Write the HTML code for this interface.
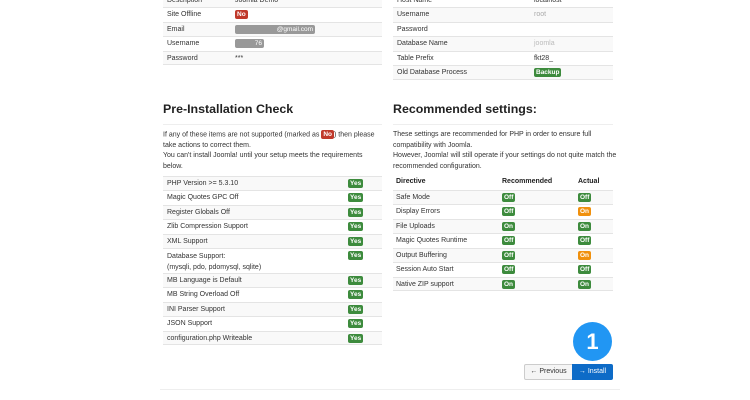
<!DOCTYPE html>
<html><head><meta charset="utf-8"><style>
body{margin:0;width:750px;height:400px;background:#fff;overflow:hidden;position:relative;font-family:"Liberation Sans",Arial,sans-serif;font-size:7px;color:#333}
.r{position:absolute;border-top:1px solid #e4e4e4;box-sizing:border-box;line-height:14px}
.s{background:#f9f9f9}
.r span{position:absolute;top:0}
.b{display:inline-block;color:#fff;font-weight:bold;font-size:6.5px;line-height:9px;padding:0 2px;border-radius:2px;vertical-align:middle}
.g{background:#3d8b3d}.red{background:#c0392b}.o{background:#f0900d}.gr{background:#999}
.h{position:absolute;font-size:12.4px;font-weight:bold;color:#222;line-height:16px}
.hl{position:absolute;height:1px;background:#eee}
.p{position:absolute;line-height:10.5px;font-size:7px;color:#333}
</style></head><body>
<div class="r s" style="left:163px;top:-7px;width:219px;height:14px"><span style="left:4px">Description</span><span style="left:72px">Joomla Demo</span></div>
<div class="r" style="left:163px;top:7px;width:219px;height:15px"><span style="left:4px">Site Offline</span><span style="left:72px"><i class="b red" style="font-style:normal">No</i></span></div>
<div class="r s" style="left:163px;top:22px;width:219px;height:14px"><span style="left:4px">Email</span><span style="left:72px"><i class="b gr" style="font-style:normal;font-weight:normal;width:76px;text-align:right">@gmail.com</i></span></div>
<div class="r" style="left:163px;top:36px;width:219px;height:15px"><span style="left:4px">Username</span><span style="left:72px"><i class="b gr" style="font-style:normal;font-weight:normal;width:25px;text-align:right">76</i></span></div>
<div class="r s" style="left:163px;top:51px;width:219px;height:14px;border-bottom:1px solid #e4e4e4"><span style="left:4px">Password</span><span style="left:72px">***</span></div>
<div class="r" style="left:393px;top:-7px;width:220px;height:15px"><span style="left:4px">Host Name</span><span style="left:141px">localhost</span></div>
<div class="r s" style="left:393px;top:7px;width:220px;height:15px"><span style="left:4px">Username</span><span style="left:141px;color:#aaa">root</span></div>
<div class="r" style="left:393px;top:22px;width:220px;height:14px"><span style="left:4px">Password</span></div>
<div class="r s" style="left:393px;top:36px;width:220px;height:15px"><span style="left:4px">Database Name</span><span style="left:141px;color:#bbb">joomla</span></div>
<div class="r" style="left:393px;top:51px;width:220px;height:14px"><span style="left:4px">Table Prefix</span><span style="left:141px">fkt28_</span></div>
<div class="r s" style="left:393px;top:65px;width:220px;height:15px;border-bottom:1px solid #e4e4e4"><span style="left:4px">Old Database Process</span><span style="left:141px"><i class="b g" style="font-style:normal">Backup</i></span></div>

<div class="h" style="left:163px;top:101px">Pre-Installation Check</div>
<div class="hl" style="left:163px;top:124px;width:219px"></div>
<div class="p" style="left:163px;top:130px;width:220px">If any of these items are not supported (marked as <i class="b red" style="font-style:normal">No</i>) then please take actions to correct them.<br>You can't install Joomla! until your setup meets the requirements below.</div>

<div class="h" style="left:393px;top:101px">Recommended settings:</div>
<div class="hl" style="left:393px;top:124px;width:220px"></div>
<div class="p" style="left:393px;top:130px;width:225px">These settings are recommended for PHP in order to ensure full compatibility with Joomla.<br>However, Joomla! will still operate if your settings do not quite match the recommended configuration.</div>

<div class="r s" style="left:163px;top:176px;width:219px;height:14px"><span style="left:4px">PHP Version &gt;= 5.3.10</span><span style="left:185px"><i class="b g" style="font-style:normal">Yes</i></span></div>
<div class="r" style="left:163px;top:190px;width:219px;height:15px"><span style="left:4px">Magic Quotes GPC Off</span><span style="left:185px"><i class="b g" style="font-style:normal">Yes</i></span></div>
<div class="r s" style="left:163px;top:205px;width:219px;height:14px"><span style="left:4px">Register Globals Off</span><span style="left:185px"><i class="b g" style="font-style:normal">Yes</i></span></div>
<div class="r" style="left:163px;top:219px;width:219px;height:15px"><span style="left:4px">Zlib Compression Support</span><span style="left:185px"><i class="b g" style="font-style:normal">Yes</i></span></div>
<div class="r s" style="left:163px;top:234px;width:219px;height:14px"><span style="left:4px">XML Support</span><span style="left:185px"><i class="b g" style="font-style:normal">Yes</i></span></div>
<div class="r" style="left:163px;top:248px;width:219px;height:25px"><span style="left:4px;line-height:11px;top:2px">Database Support:<br>(mysqli, pdo, pdomysql, sqlite)</span><span style="left:185px"><i class="b g" style="font-style:normal">Yes</i></span></div>
<div class="r s" style="left:163px;top:273px;width:219px;height:14px"><span style="left:4px">MB Language is Default</span><span style="left:185px"><i class="b g" style="font-style:normal">Yes</i></span></div>
<div class="r" style="left:163px;top:287px;width:219px;height:15px"><span style="left:4px">MB String Overload Off</span><span style="left:185px"><i class="b g" style="font-style:normal">Yes</i></span></div>
<div class="r s" style="left:163px;top:302px;width:219px;height:14px"><span style="left:4px">INI Parser Support</span><span style="left:185px"><i class="b g" style="font-style:normal">Yes</i></span></div>
<div class="r" style="left:163px;top:316px;width:219px;height:15px"><span style="left:4px">JSON Support</span><span style="left:185px"><i class="b g" style="font-style:normal">Yes</i></span></div>
<div class="r s" style="left:163px;top:331px;width:219px;height:14px;border-bottom:1px solid #e4e4e4"><span style="left:4px">configuration.php Writeable</span><span style="left:185px"><i class="b g" style="font-style:normal">Yes</i></span></div>

<div class="r" style="left:393px;top:175px;width:220px;height:15px;border-top:none;font-weight:bold;color:#222"><span style="left:3px">Directive</span><span style="left:109px">Recommended</span><span style="left:185px">Actual</span></div>
<div class="r s" style="left:393px;top:190px;width:220px;height:14px"><span style="left:3px">Safe Mode</span><span style="left:109px"><i class="b g" style="font-style:normal">Off</i></span><span style="left:185px"><i class="b g" style="font-style:normal">Off</i></span></div>
<div class="r" style="left:393px;top:204px;width:220px;height:15px"><span style="left:3px">Display Errors</span><span style="left:109px"><i class="b g" style="font-style:normal">Off</i></span><span style="left:185px"><i class="b o" style="font-style:normal">On</i></span></div>
<div class="r s" style="left:393px;top:219px;width:220px;height:14px"><span style="left:3px">File Uploads</span><span style="left:109px"><i class="b g" style="font-style:normal">On</i></span><span style="left:185px"><i class="b g" style="font-style:normal">On</i></span></div>
<div class="r" style="left:393px;top:233px;width:220px;height:15px"><span style="left:3px">Magic Quotes Runtime</span><span style="left:109px"><i class="b g" style="font-style:normal">Off</i></span><span style="left:185px"><i class="b g" style="font-style:normal">Off</i></span></div>
<div class="r s" style="left:393px;top:248px;width:220px;height:14px"><span style="left:3px">Output Buffering</span><span style="left:109px"><i class="b g" style="font-style:normal">Off</i></span><span style="left:185px"><i class="b o" style="font-style:normal">On</i></span></div>
<div class="r" style="left:393px;top:262px;width:220px;height:15px"><span style="left:3px">Session Auto Start</span><span style="left:109px"><i class="b g" style="font-style:normal">Off</i></span><span style="left:185px"><i class="b g" style="font-style:normal">Off</i></span></div>
<div class="r s" style="left:393px;top:277px;width:220px;height:14px;border-bottom:1px solid #e4e4e4"><span style="left:3px">Native ZIP support</span><span style="left:109px"><i class="b g" style="font-style:normal">On</i></span><span style="left:185px"><i class="b g" style="font-style:normal">On</i></span></div>

<div style="position:absolute;left:573px;top:322px;width:39px;height:39px;border-radius:50%;background:#2196f3;color:#fff;font-size:22px;font-weight:bold;text-align:center;line-height:39px">1</div>
<div style="position:absolute;left:524px;top:364px;width:47px;height:14px;border:1px solid #ccc;background:#f5f5f5;border-radius:2px 0 0 2px;text-align:center;line-height:14px;color:#333">&#8592; Previous</div>
<div style="position:absolute;left:572px;top:364px;width:41px;height:16px;background:#0d6bc7;border-radius:0 2px 2px 0;text-align:center;line-height:16px;color:#fff">&#8594; Install</div>
<div class="hl" style="left:160px;top:389px;width:460px"></div>
</body></html>
